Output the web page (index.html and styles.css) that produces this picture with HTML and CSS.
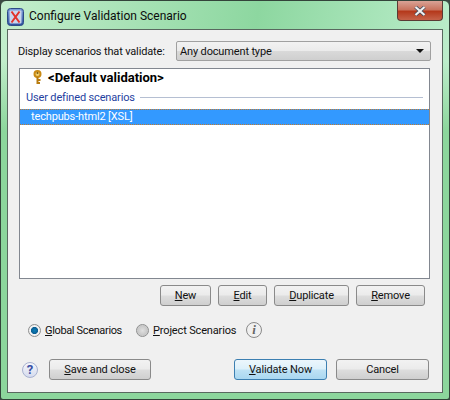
FILE: index.html

```html
<!DOCTYPE html>
<html lang="en">
<head>
  <meta charset="UTF-8">
  <title>Configure Validation Scenario</title>
  <link rel="stylesheet" href="styles.css">
</head>
<body>
  <div class="window">
    <div class="titlebar">
      <svg class="app-icon" width="17" height="18" viewBox="0 0 17 18">
        <defs>
          <linearGradient id="appBg" x1="0" y1="0" x2="0" y2="1">
            <stop offset="0" stop-color="#7f9fdc"/>
            <stop offset="1" stop-color="#2c4f9e"/>
          </linearGradient>
        </defs>
        <rect x="0.5" y="0.5" width="16" height="17" rx="3" fill="url(#appBg)" stroke="#2d4a86"/>
        <rect x="2.5" y="2.5" width="12" height="13" rx="1" fill="#c9d6ee"/>
        <path d="M4.5 3.5 L12.5 14.5 M12.5 3.5 L4.5 14.5" stroke="#e2322a" stroke-width="2" fill="none"/>
      </svg>
      <span class="title">Configure Validation Scenario</span>
      <div class="close-btn">
        <svg width="14" height="10" viewBox="0 0 14 10">
          <path d="M2.5 1 L11.5 9 M11.5 1 L2.5 9" stroke="#3f4a5c" stroke-width="3.6" fill="none"/>
          <path d="M2.5 1 L11.5 9 M11.5 1 L2.5 9" stroke="#f2f2f2" stroke-width="2.2" fill="none"/>
        </svg>
      </div>
    </div>

    <div class="panel">
      <div class="filter-row">
        <label class="filter-label">Display scenarios that validate:</label>
        <div class="select">
          <span>Any document type</span>
          <span class="arrow"></span>
        </div>
      </div>

      <div class="list">
        <div class="row-default">
          <svg class="key" width="9" height="15" viewBox="0 0 9 15">
            <circle cx="4.5" cy="4" r="3" fill="#f0d070" stroke="#c98a14" stroke-width="2"/>
            <circle cx="4.5" cy="3" r="1" fill="#7a5a10"/>
            <path d="M4.5 7 V14 M4.5 10 H7.5 M4.5 13 H7" stroke="#b87c10" stroke-width="2" fill="none"/>
          </svg>
          <b>&lt;Default validation&gt;</b>
        </div>
        <div class="group-row">
          <span>User defined scenarios</span>
          <span class="group-line"></span>
        </div>
        <div class="row-selected">techpubs-html2 [XSL]</div>
      </div>

      <div class="actions">
        <button class="btn btn-new"><u>N</u>ew</button>
        <button class="btn btn-edit"><u>E</u>dit</button>
        <button class="btn btn-dup"><u>D</u>uplicate</button>
        <button class="btn btn-remove"><u>R</u>emove</button>
      </div>

      <div class="scope-row">
        <span class="radio checked"></span>
        <span class="radio-text text-global"><u>G</u>lobal Scenarios</span>
        <span class="radio"></span>
        <span class="radio-text text-project"><u>P</u>roject Scenarios</span>
        <span class="info">i</span>
      </div>

      <div class="footer">
        <span class="help">?</span>
        <button class="btn btn-save"><u>S</u>ave and close</button>
        <button class="btn btn-validate"><u>V</u>alidate Now</button>
        <button class="btn btn-cancel">Cancel</button>
      </div>
    </div>
  </div>
</body>
</html>
```

FILE: styles.css

```css
* { box-sizing: border-box; }
html, body { margin: 0; padding: 0; }
body { width: 450px; height: 400px; overflow: hidden; background: #3c4a42; font-family: Roboto, "Open Sans", sans-serif; font-size: 11px; letter-spacing: -0.15px; color: #111; }

.window { width: 450px; height: 400px; padding: 0 6px 6px; border: 1px solid #33443a; border-radius: 6px 6px 3px 3px; background: linear-gradient(rgba(140, 214, 156, 0) 60px, #8cd69c 130px), linear-gradient(100deg, #c4eecd 0%, #8dd7a0 50%, #b6ebc6 85%, #d3f3dc 100%); display: flex; flex-direction: column; }

.titlebar { height: 28px; flex: none; display: flex; align-items: center; }
.app-icon { margin-top: 3px; }
.title { margin-left: 5px; margin-top: 2px; font-size: 12px; letter-spacing: 0; color: #0c0c0c; }
.close-btn { margin-left: auto; margin-top: -8px; width: 46px; height: 20px; border: 1px solid #5a3a34; border-top: none; border-radius: 0 0 4px 4px; background: linear-gradient(#d9a396 0%, #c9745f 45%, #b5391c 55%, #c5634a 100%); display: flex; align-items: center; justify-content: center; }

.panel { flex: 1; background: #f0f0f0; border: 1px solid #59685f; padding: 10px 11px 0; display: flex; flex-direction: column; }

.filter-row { display: flex; align-items: center; height: 21px; }
.filter-label { width: 157px; margin-left: -1px; margin-right: 1px; padding-top: 1px; white-space: nowrap; }
.select { width: 255px; height: 20px; border: 1px solid #a0a0a0; border-radius: 2px; background: linear-gradient(#f2f2f2 0%, #ebebeb 48%, #d9d9d9 52%, #cfcfcf 100%); padding: 1px 3px 0; display: flex; align-items: center; justify-content: space-between; }
.arrow { width: 0; height: 0; margin-right: 3px; border-left: 4px solid transparent; border-right: 4px solid transparent; border-top: 4px solid #111; }

.list { margin-top: 7px; margin-right: 1px; height: 211px; border: 1px solid #828790; background: #fff; display: flex; flex-direction: column; }
.row-default { display: flex; align-items: center; height: 16px; padding-left: 13px; }
.row-default b { margin-left: 6px; font-size: 13px; letter-spacing: 0; color: #000; }
.key { flex: none; }
.group-row { display: flex; align-items: center; margin-top: 2px; height: 20px; padding: 0 6px; color: #1f3f9f; }
.group-line { flex: 1; height: 1px; margin-left: 5px; background: #b5bfd2; }
.row-selected { margin-top: 2px; height: 16px; line-height: 14px; padding-left: 11px; background: #3399ff; color: #fff; border-top: 1px dotted #c47a2c; border-bottom: 1px dotted #c47a2c; }

.btn { height: 21px; padding: 0; border: 1px solid #8a8a8a; border-radius: 3px; background: linear-gradient(#f2f2f2 0%, #ebebeb 48%, #dddddd 52%, #cfcfcf 100%); font-family: inherit; font-size: 11px; letter-spacing: inherit; color: #111; }

.actions { display: flex; margin-top: 6px; padding-left: 141px; }
.btn-new { width: 51px; }
.btn-edit { width: 49px; margin-left: 7px; }
.btn-dup { width: 75px; margin-left: 7px; }
.btn-remove { width: 69px; margin-left: 7px; }

.scope-row { display: flex; align-items: center; height: 20px; margin-top: 14px; padding-left: 9px; }
.radio { width: 13px; height: 13px; flex: none; border: 1px solid #8e8f8f; border-radius: 50%; background: radial-gradient(circle at 50% 50%, #e0e0e0 0%, #c8c8c8 60%, #eeeeee 100%); }
.radio.checked { background: radial-gradient(circle at 50% 50%, #0a7fb8 0%, #0d5f94 42%, #f4f4f4 50%, #e6e6e6 100%); }
.radio-text { margin-left: 4px; white-space: nowrap; }
.text-global { width: 78px; letter-spacing: -0.35px; margin-right: 13px; }
.text-project { width: 93px; }
.info { width: 16px; height: 16px; border: 1px solid #8a8a8a; border-radius: 50%; font-family: "Liberation Serif", serif; font-style: italic; font-weight: bold; font-size: 13px; line-height: 14px; text-align: center; color: #666; }

.footer { display: flex; align-items: center; margin-top: 19px; padding-left: 3px; }
.help { width: 16px; height: 16px; flex: none; border: 1px solid #a8b2d0; border-radius: 50%; background: linear-gradient(#f6f7fb, #d5dbee); color: #3a4fa5; font-weight: bold; font-size: 13px; line-height: 14px; text-align: center; }
.btn-save { width: 102px; margin-left: 11px; }
.btn-validate { width: 93px; margin-left: 83px; border-color: #3c7fb1; background: linear-gradient(#ecf6fc 0%, #dcf0fa 48%, #bfe2f5 52%, #a9d7f0 100%); }
.btn-cancel { width: 93px; margin-left: 9px; }

u { text-underline-offset: 1px; }
```
